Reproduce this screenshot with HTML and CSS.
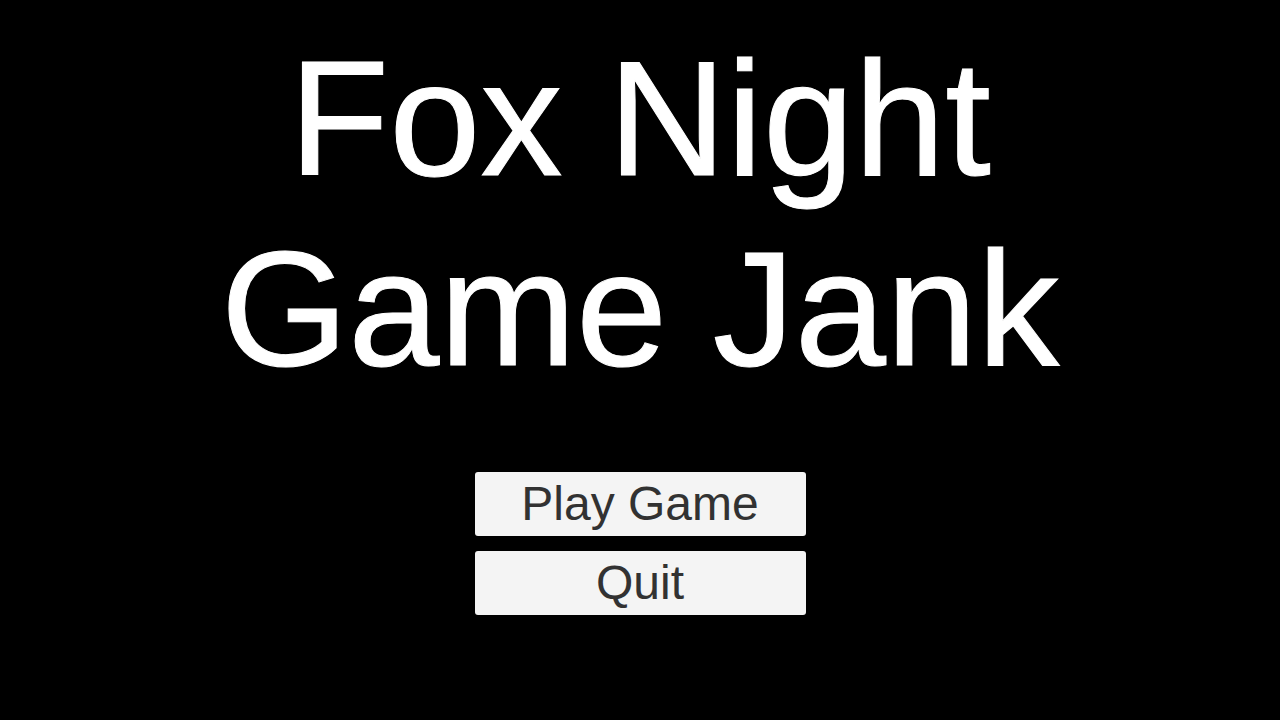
FILE: index.html
```html
<!DOCTYPE html>
<html>
<head>
<meta charset="utf-8">
<link rel="stylesheet" href="styles.css">
</head>
<body>
<main class="menu">
  <h1 class="title">Fox Night<br>Game Jank</h1>
  <div class="buttons">
    <button class="btn">Play Game</button>
    <button class="btn">Quit</button>
  </div>
</main>
</body>
</html>
```
FILE: styles.css
```css
html, body {
  margin: 0;
  padding: 0;
  background: #000;
  width: 1280px;
  height: 720px;
  overflow: hidden;
}
.menu {
  display: flex;
  flex-direction: column;
  align-items: center;
  padding-top: 24px;
  font-family: "Liberation Sans", Arial, sans-serif;
}
.title {
  margin: 0;
  color: #fff;
  font-weight: normal;
  font-size: 164px;
  line-height: 190px;
  text-align: center;
  -webkit-text-stroke: 1px #fff;
}
.buttons {
  margin-top: 68px;
  display: flex;
  flex-direction: column;
  gap: 15px;
}
.btn {
  width: 331px;
  height: 64px;
  padding: 0;
  border: none;
  border-radius: 3px;
  background: #f4f4f4;
  color: #323232;
  font-family: "Liberation Sans", Arial, sans-serif;
  font-size: 48px;
  line-height: 64px;
}
```
